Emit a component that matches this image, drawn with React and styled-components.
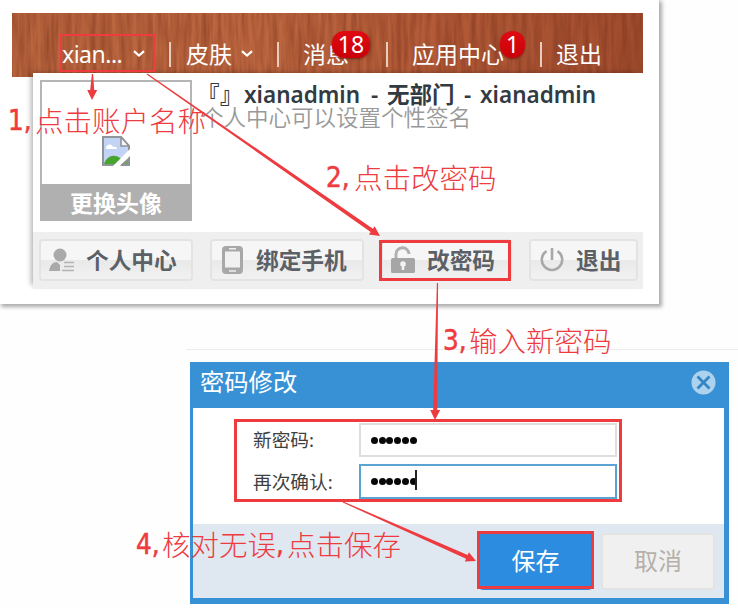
import React from "react";
import styled, { createGlobalStyle } from "styled-components";

const RED = "#ed3b40";

const GlobalStyle = createGlobalStyle`
  * { box-sizing: border-box; }
  body {
    margin: 0;
    background: #fefefe;
    font-family: "Noto Sans", "Noto Sans CJK SC", sans-serif;
    overflow: hidden;
  }
`;

const Stage = styled.main`
  position: relative;
  width: 738px;
  height: 608px;
  overflow: hidden;
`;

/* ---------- account panel ---------- */

const Panel = styled.section`
  width: 659px;
  height: 304px;
  padding: 13px 16px 0 12px;
  background: #fff;
  box-shadow: 2px 2px 4px 1px rgba(0, 0, 0, 0.33);
`;

const TopBar = styled.header`
  position: relative;
  height: 64px;
  overflow: hidden;
  background: linear-gradient(90deg, #b8653e 0%, #bd6740 40%, #b45c39 65%, #a04c2e 100%);
`;

const Grain = styled.svg`
  position: absolute;
  inset: 0;
  width: 100%;
  height: 100%;
`;

const Nav = styled.nav`
  position: relative;
  display: flex;
  align-items: center;
  height: 59px;
  padding: 23px 0 0 50px;
  color: #fff;
  font-size: 23px;
  line-height: 30px;
`;

const NavItem = styled.a`
  position: relative;
  display: flex;
  align-items: center;
  flex: none;
  width: ${(p) => p.$width}px;
  height: 30px;
  white-space: nowrap;
  letter-spacing: ${(p) => p.$tracking || 0}px;
  gap: ${(p) => p.$gap || 9}px;
`;

const Divider = styled.i`
  flex: none;
  width: 2px;
  height: 25px;
  margin-right: ${(p) => p.$after}px;
  background: #e8cdbd;
`;

const Badge = styled.span`
  position: absolute;
  left: ${(p) => p.$left}px;
  top: -8px;
  width: ${(p) => p.$width}px;
  height: 27px;
  border-radius: 12px;
  background: linear-gradient(#e00b12, #c90008);
  box-shadow: 0 1px 2px rgba(60, 0, 0, 0.5);
  font-size: 23px;
  line-height: 26px;
  letter-spacing: 0;
  text-align: center;
`;

const Dropdown = styled.div`
  position: relative;
  width: 610px;
  height: 216px;
  margin: -4px 0 0 21px;
  background: #fff;
  box-shadow: -4px -2px 5px -2px rgba(0, 0, 0, 0.3);
`;

const Profile = styled.div`
  display: flex;
  height: 159px;
  padding: 7px 0 0 7px;
`;

const Avatar = styled.div`
  display: flex;
  flex-direction: column;
  align-items: center;
  flex: none;
  width: 152px;
  height: 141px;
  padding-top: 54px;
  border: 2px solid #b5b5b5;
  svg { flex: none; }
`;

const AvatarLabel = styled.div`
  width: 152px;
  height: 37px;
  margin-top: 18px;
  flex: none;
  background: #b0b0b0;
  color: #fff;
  font-size: 23px;
  font-weight: 600;
  line-height: 39px;
  text-align: center;
`;

const Identity = styled.div`
  padding-left: 9px;
`;

const NameLine = styled.div`
  display: flex;
  height: 30px;
  color: #323a42;
  font-size: 22.5px;
  font-weight: 600;
  line-height: 29px;
  white-space: nowrap;
`;

const NamePart = styled.span`
  flex: none;
  width: ${(p) => p.$width}px;
  letter-spacing: ${(p) => p.$tracking || 0}px;
`;

const Brackets = styled(NamePart)`
  margin-left: -4px;
`;

const Signature = styled.div`
  height: 24px;
  margin-top: -5px;
  color: #999;
  font-size: 22.5px;
  font-weight: 350;
  line-height: 25px;
  white-space: nowrap;
`;

const Actions = styled.div`
  display: flex;
  gap: 17px;
  height: 57px;
  padding: 7px 0 0 6px;
  background: #efefef;
`;

const ActionButton = styled.button`
  display: flex;
  align-items: center;
  flex: none;
  width: ${(p) => p.$width}px;
  height: 42px;
  padding: 0 0 1px ${(p) => p.$pad}px;
  gap: ${(p) => p.$gap}px;
  border: 2px solid #e3e3e3;
  border-radius: 4px;
  background: linear-gradient(#f6f6f6 0 50%, #e9e9e9 50%, #f1f1f1 100%);
  color: #5b6067;
  font: 600 22.7px/30px "Noto Sans CJK SC", sans-serif;
  white-space: nowrap;
  svg { flex: none; }
`;

/* ---------- password dialog ---------- */

const DialogFrame = styled.div`
  width: 552px;
  margin: 45px 0 0 186px;
  padding: 12px 0 0 4px;
  border-top: 1px solid #ececec;
`;

const Dialog = styled.section`
  width: 539px;
  height: 242px;
  padding: 0 5px 6px 3px;
  background: #3891d5;
`;

const DialogHeader = styled.header`
  display: flex;
  align-items: center;
  justify-content: space-between;
  height: 46px;
  padding: 0 8px 6px 7px;
  color: #fff;
  font-size: 24.3px;
  line-height: 32px;
`;

const DialogBody = styled.div`
  display: grid;
  align-content: start;
  row-gap: 7px;
  height: 116px;
  padding: 15px 0 0 60px;
  background: #fff;
`;

const Field = styled.label`
  display: grid;
  grid-template-columns: 106px 258px;
  align-items: center;
  color: #3f3f3f;
  font-size: 18.7px;
  line-height: 24px;
`;

const Control = styled.span`
  display: flex;
  align-items: center;
  gap: 1px;
  height: ${(p) => (p.$focused ? 35 : 34)}px;
  padding-left: 10px;
  border: ${(p) => (p.$focused ? "2px solid #5ba3d2" : "2px solid #dedede")};
  background: #fff;
`;

const Dot = styled.i`
  width: 7px;
  height: 7px;
  margin-right: -0.3px;
  border-radius: 50%;
  background: #080808;
`;

const Caret = styled.i`
  width: 2px;
  height: 20px;
  margin: -3px 0 0 -2px;
  background: #222;
`;

const DialogFooter = styled.footer`
  display: flex;
  justify-content: flex-end;
  gap: 9px;
  height: 74px;
  padding: 9px 9px 0 0;
  background: #dfe8f1;
`;

const DialogButton = styled.button`
  width: ${(p) => (p.$primary ? 113 : 114)}px;
  height: 57px;
  padding: 0 0 3px;
  border: 2px solid ${(p) => (p.$primary ? "#2c8de0" : "#e3e3e3")};
  border-radius: 4px;
  background: ${(p) => (p.$primary ? "#2c8de0" : "#f0f0f0")};
  color: ${(p) => (p.$primary ? "#fff" : "#b5b1aa")};
  font: 400 24px/30px "Noto Sans CJK SC", sans-serif;
`;

/* ---------- tutorial marks ---------- */

const Arrows = styled.svg`
  position: absolute;
  left: 0;
  top: 0;
`;

const Highlight = styled.div`
  position: absolute;
  left: ${(p) => p.$x}px;
  top: ${(p) => p.$y}px;
  width: ${(p) => p.$w}px;
  height: ${(p) => p.$h}px;
  border: ${(p) => p.$b || 3}px solid ${RED};
`;

const Note = styled.div`
  position: absolute;
  left: ${(p) => p.$x}px;
  top: ${(p) => p.$y}px;
  display: flex;
  color: ${RED};
  font-family: "Noto Sans CJK SC", sans-serif;
  font-size: 28.5px;
  font-weight: 300;
  line-height: 36px;
  white-space: nowrap;
`;

const Latin = styled.span`
  width: ${(p) => p.$width}px;
  font-family: "DejaVu Sans Condensed", "DejaVu Sans", sans-serif;
  font-stretch: condensed;
  font-size: 27.5px;
  font-weight: 400;
  -webkit-text-stroke: 0.5px ${RED};
`;

const Chevron = () => (
  <svg width="12" height="8" viewBox="0 0 12 8" fill="none" stroke="#fff" strokeWidth="2.2">
    <path d="M1 1.2 6 5.5l5-4.3" />
  </svg>
);

const BrokenImage = () => (
  <svg width="28" height="30" viewBox="0 0 28 30">
    <path d="M1 1h18l8 9v19H1z" fill="#c3d3f6" stroke="#8f9499" strokeWidth="2" />
    <path d="M4 12c0-4 6-5 7-1 3-1 4 1 4 2H4z" fill="#fff" />
    <path d="M2 28c2-6 7-9 11-8 3 0 5 2 7 4v4z" fill="#45a52f" />
    <path d="M19 1v9h8z" fill="#f6f6f6" stroke="#8f9499" strokeWidth="1.6" />
    <path d="M28 13v7L18 30H11z" fill="#fff" />
    <path d="M19 29h8v-7z" fill="#7e9b78" stroke="#8f9499" />
  </svg>
);

const PersonIcon = () => (
  <svg width="26" height="24" viewBox="0 0 26 24" fill="#aaa">
    <circle cx="11" cy="7" r="6.5" />
    <path d="M0 23c1-6 4-9 8-9l3 3v6z" />
    <path d="M15 14.500h10M15 18.500h10M13 22.500h12" stroke="#b4b4b4" strokeWidth="1.6" />
  </svg>
);

const PhoneIcon = () => (
  <svg width="21" height="28" viewBox="0 0 21 28">
    <rect x="0" y="0" width="21" height="28" rx="4" fill="#a8a8a8" />
    <path d="M3 5.500h15v16H3z" fill="#f1f1f1" />
    <path d="M7 2.800h7M7 25h7" stroke="#eee" strokeWidth="1.5" />
  </svg>
);

const LockIcon = () => (
  <svg width="24" height="28" viewBox="0 0 24 28">
    <path d="M5 13V8.500a6.500 6.500 0 0 1 13-.5" fill="none" stroke="#b0b0b0" strokeWidth="3" />
    <rect y="12" width="24" height="15" rx="1.500" fill="#a6a6a6" />
    <circle cx="12" cy="18" r="2.800" fill="#f2f2f2" />
    <path d="M12 18v6" stroke="#f2f2f2" strokeWidth="2.500" />
  </svg>
);

const PowerIcon = () => (
  <svg width="24" height="25" viewBox="0 0 24 25" fill="none" stroke="#a8a8a8" strokeWidth="2.600">
    <path d="M6.500 4.200a10.200 10.200 0 1 0 11 0M12 1v12" />
  </svg>
);

const CloseIcon = () => (
  <svg width="25" height="25" viewBox="0 0 25 25">
    <circle cx="12.500" cy="12.500" r="12" fill="#acd2ee" />
    <path d="m6.500 6.500 12 12m0-12-12 12" stroke="#3286c5" strokeWidth="2.800" />
  </svg>
);

const PasswordField = ({ label, focused }) => (
  <Field>
    {label}
    <Control $focused={focused}>
      {[0, 1, 2, 3, 4, 5].map((n) => <Dot key={n} />)}
      {focused && <Caret />}
    </Control>
  </Field>
);

/* A tapered line that widens toward its arrowhead. */
const Arrow = ({ x1, y1, x2, y2, w, head = 10, spread = 5 }) => {
  const len = Math.hypot(x2 - x1, y2 - y1);
  const dx = (x2 - x1) / len;
  const dy = (y2 - y1) / len;
  const bx = x2 - dx * head;
  const by = y2 - dy * head;
  const pt = (x, y, o) => `${x - dy * o},${y + dx * o}`;
  return (
    <polygon
      points={[
        pt(x1, y1, 0.6), pt(bx, by, w / 2), pt(bx, by, spread), `${x2},${y2}`,
        pt(bx, by, -spread), pt(bx, by, -w / 2), pt(x1, y1, -0.6),
      ].join(" ")}
    />
  );
};

export default function App() {
  return (
    <Stage>
      <GlobalStyle />
      <Panel>
        <TopBar>
          <Grain aria-hidden="true">
            <filter id="grain" x="0" y="0" width="100%" height="100%" colorInterpolationFilters="sRGB">
              <feTurbulence type="fractalNoise" baseFrequency="0.2 0.018" numOctaves="3" seed="7" />
              <feColorMatrix values="0 0 0 0 0.42  0 0 0 0 0.15  0 0 0 0 0.07  0.8 0 0 0 -0.25" />
            </filter>
            <rect width="100%" height="100%" filter="url(#grain)" />
          </Grain>
          <Nav>
            <NavItem $width={107} $tracking={-0.5} $gap={11}>xian... <Chevron /></NavItem>
            <Divider $after={15} />
            <NavItem $width={91}>皮肤 <Chevron /></NavItem>
            <Divider $after={24} />
            <NavItem $width={83}>消息<Badge $left={29} $width={38}>18</Badge></NavItem>
            <Divider $after={24} />
            <NavItem $width={128}>应用中心<Badge $left={88} $width={25}>1</Badge></NavItem>
            <Divider $after={14} />
            <NavItem $width={50}>退出</NavItem>
          </Nav>
        </TopBar>
        <Dropdown>
          <Profile>
            <Avatar>
              <BrokenImage />
              <AvatarLabel>更换头像</AvatarLabel>
            </Avatar>
            <Identity>
              <NameLine>
                <Brackets $width={47} $tracking={0.5}>『』</Brackets>
                <NamePart $width={127}>xianadmin</NamePart>
                <NamePart $width={16}>-</NamePart>
                <NamePart $width={77}>无部门</NamePart>
                <NamePart $width={16}>-</NamePart>
                <NamePart $width={120}>xianadmin</NamePart>
              </NameLine>
              <Signature>个人中心可以设置个性签名</Signature>
            </Identity>
          </Profile>
          <Actions>
            <ActionButton $width={154} $pad={8} $gap={11}><PersonIcon />个人中心</ActionButton>
            <ActionButton $width={154} $pad={10} $gap={13}><PhoneIcon />绑定手机</ActionButton>
            <ActionButton $width={131} $pad={8} $gap={12}><LockIcon />改密码</ActionButton>
            <ActionButton $width={109} $pad={9} $gap={12}><PowerIcon />退出</ActionButton>
          </Actions>
        </Dropdown>
      </Panel>

      <DialogFrame>
        <Dialog>
          <DialogHeader>密码修改<CloseIcon /></DialogHeader>
          <DialogBody>
            <PasswordField label="新密码:" />
            <PasswordField label="再次确认:" focused />
          </DialogBody>
          <DialogFooter>
            <DialogButton $primary>保存</DialogButton>
            <DialogButton>取消</DialogButton>
          </DialogFooter>
        </Dialog>
      </DialogFrame>

      <Highlight $x={60} $y={34} $w={95} $h={38} $b={2} />
      <Highlight $x={379} $y={240} $w={132} $h={41} />
      <Highlight $x={234} $y={419} $w={388} $h={83} />
      <Highlight $x={477} $y={531} $w={117} $h={58} />
      <Arrows width="738" height="608" fill={RED}>
        <Arrow x1={92.500} y1={74} x2={92} y2={100} w={4} />
        <Arrow x1={147} y1={74} x2={380} y2={236} w={4} />
        <Arrow x1={437.500} y1={283} x2={435} y2={420} w={4} />
        <Arrow x1={343} y1={502} x2={476} y2={561} w={4} />
      </Arrows>
      <Note $x={8} $y={102}><Latin $width={27}>1,</Latin>点击账户名称</Note>
      <Note $x={326} $y={159}><Latin $width={28}>2,</Latin>点击改密码</Note>
      <Note $x={443} $y={322}><Latin $width={26}>3,</Latin>输入新密码</Note>
      <Note $x={136} $y={526}>
        <Latin $width={26}>4,</Latin>核对无误<Latin $width={11}>,</Latin>点击保存
      </Note>
    </Stage>
  );
}
